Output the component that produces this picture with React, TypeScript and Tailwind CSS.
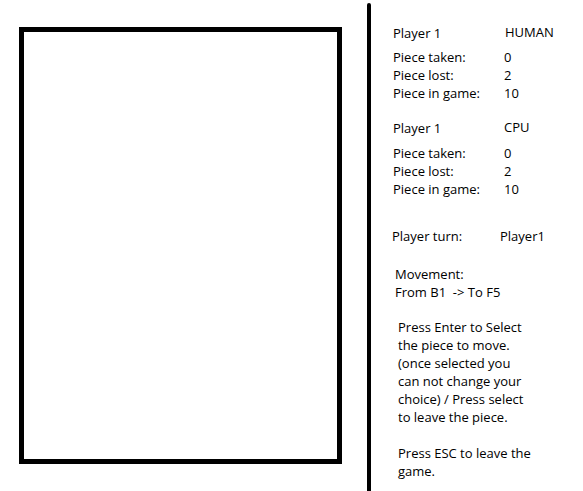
import React from "react";

const font = { fontFamily: '"Open Sans", "Noto Sans", sans-serif' };

function Row({ label, value, w }: { label: string; value: string; w: string }) {
  return (
    <div className="flex h-[18px] leading-[18px]">
      <span className={w}>{label}</span>
      <span>{value}</span>
    </div>
  );
}

export default function App() {
  return (
    <div
      className="flex w-[583px] h-[491px] overflow-hidden bg-white text-black text-[13px]"
      style={font}
    >
      <div className="pl-[19px] pt-[27px]">
        <div className="w-[323px] h-[437px] border-[5px] border-black" />
      </div>
      <div className="ml-[25px] mt-[3px] w-[4px] h-[488px] bg-black rounded-t-full" />
      <div className="flex flex-col">
        <div className="mt-[24px] pl-[22px]">
          <div className="flex h-[18px] leading-[18px]">
            <span className="w-[112px]">Player 1</span>
            <span className="-translate-y-px">HUMAN</span>
          </div>
          <div className="mt-[6px]">
            <Row label="Piece taken:" value="0" w="w-[111px]" />
            <Row label="Piece lost:" value="2" w="w-[111px]" />
            <Row label="Piece in game:" value="10" w="w-[111px]" />
          </div>
        </div>
        <div className="mt-[17px] pl-[22px]">
          <div className="flex h-[18px] leading-[18px]">
            <span className="w-[111px]">Player 1</span>
            <span className="-translate-y-px">CPU</span>
          </div>
          <div className="mt-[7px]">
            <Row label="Piece taken:" value="0" w="w-[111px]" />
            <Row label="Piece lost:" value="2" w="w-[111px]" />
            <Row label="Piece in game:" value="10" w="w-[111px]" />
          </div>
        </div>
        <div className="mt-[29px] pl-[21px]">
          <Row label="Player turn:" value="Player1" w="w-[108px]" />
        </div>
        <div className="mt-[20px] pl-[24px] leading-[18px]">
          <div>Movement:</div>
          <div className="whitespace-pre">From B1  -&gt; To F5</div>
        </div>
        <div className="mt-[17px] pl-[27px] leading-[18px]">
          <div>Press Enter to Select</div>
          <div>the piece to move.</div>
          <div>(once selected you</div>
          <div>can not change your</div>
          <div>choice) / Press select</div>
          <div>to leave the piece.</div>
          <div className="h-[18px]" />
          <div>Press ESC to leave the</div>
          <div>game.</div>
        </div>
      </div>
    </div>
  );
}
